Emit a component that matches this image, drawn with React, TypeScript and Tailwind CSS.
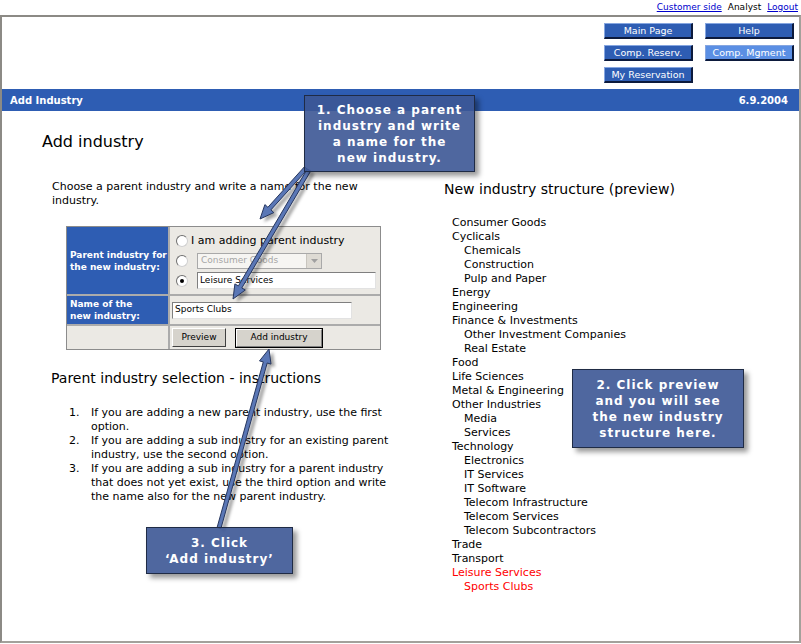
import React from "react";

const tree: { name: string; sub?: boolean; red?: boolean }[] = [
  { name: "Consumer Goods" },
  { name: "Cyclicals" },
  { name: "Chemicals", sub: true },
  { name: "Construction", sub: true },
  { name: "Pulp and Paper", sub: true },
  { name: "Energy" },
  { name: "Engineering" },
  { name: "Finance & Investments" },
  { name: "Other Investment Companies", sub: true },
  { name: "Real Estate", sub: true },
  { name: "Food" },
  { name: "Life Sciences" },
  { name: "Metal & Engineering" },
  { name: "Other Industries" },
  { name: "Media", sub: true },
  { name: "Services", sub: true },
  { name: "Technology" },
  { name: "Electronics", sub: true },
  { name: "IT Services", sub: true },
  { name: "IT Software", sub: true },
  { name: "Telecom Infrastructure", sub: true },
  { name: "Telecom Services", sub: true },
  { name: "Telecom Subcontractors", sub: true },
  { name: "Trade" },
  { name: "Transport" },
  { name: "Leisure Services", red: true },
  { name: "Sports Clubs", sub: true, red: true },
];

// polygon points for a thick arrow ending at (x2, y2)
const arrowPoints = (x1: number, y1: number, x2: number, y2: number) => {
  const w = 2;
  const hl = 14;
  const hw = 6;
  const dx = x2 - x1;
  const dy = y2 - y1;
  const len = Math.hypot(dx, dy);
  const ux = dx / len;
  const uy = dy / len;
  const px = -uy;
  const py = ux;
  const bx = x2 - ux * hl;
  const by = y2 - uy * hl;
  const pts = [
    [x1 + px * w, y1 + py * w],
    [bx + px * w, by + py * w],
    [bx + px * hw, by + py * hw],
    [x2, y2],
    [bx - px * hw, by - py * hw],
    [bx - px * w, by - py * w],
    [x1 - px * w, y1 - py * w],
  ];
  return pts.map((p) => p.map((n) => n.toFixed(1)).join(",")).join(" ");
};

const arrows = [
  [306, 168, 260, 219],
  [309, 170, 233, 299],
  [219, 528, 269, 349],
];

const TopButton: React.FC<{ label: string; active?: boolean }> = ({ label, active }) => (
  <div
    className={`h-[16px] flex items-center justify-center text-white text-[9.5px] leading-none border border-t-[#86a6e0] border-l-[#86a6e0] border-r-2 border-b-2 border-r-[#0c1a3c] border-b-[#0c1a3c] ${
      active ? "bg-[#5b8fe4]" : "bg-[#2e5db3]"
    }`}
  >
    {label}
  </div>
);

const Radio: React.FC<{ checked?: boolean }> = ({ checked }) => (
  <span className="w-[12px] h-[12px] rounded-full bg-white border border-t-[#6f6f6f] border-l-[#6f6f6f] border-r-[#d0d0d0] border-b-[#d0d0d0] flex items-center justify-center shrink-0">
    {checked && <span className="w-[4px] h-[4px] rounded-full bg-black" />}
  </span>
);

const Callout: React.FC<{ className: string; lines: string[] }> = ({ className, lines }) => (
  <div
    className={`absolute flex flex-col items-center justify-center bg-[rgba(60,87,149,0.9)] border border-[#1f2b45] shadow-[4px_4px_5px_rgba(0,0,0,0.4)] text-white font-bold text-[12px] leading-[16px] tracking-[1px] text-center ${className}`}
  >
    {lines.map((l) => (
      <div key={l} className="whitespace-nowrap">
        {l}
      </div>
    ))}
  </div>
);

export default function App() {
  return (
    <div className="relative w-[801px] h-[644px] bg-white overflow-hidden text-black font-['DejaVu_Sans',sans-serif]">
      {/* top links */}
      <div className="h-[15px] flex justify-end items-center gap-[6px] pr-[3px] text-[9px] leading-none">
        <span className="text-[#0000cc] underline">Customer side</span>
        <span>Analyst</span>
        <span className="text-[#0000cc] underline">Logout</span>
      </div>

      {/* frame */}
      <div className="h-[628px] border-2 border-[#a3a19b] border-t-[#8c8a85] border-l-[#8c8a85]">
        <div className="flex justify-end pr-[5px] pt-[6px]">
          <div className="grid grid-cols-[89px_89px] gap-x-[12px] gap-y-[6px]">
            <TopButton label="Main Page" />
            <TopButton label="Help" />
            <TopButton label="Comp. Reserv." />
            <TopButton label="Comp. Mgment" active />
            <TopButton label="My Reservation" />
          </div>
        </div>

        <div className="mt-[6px] h-[22px] bg-[#2e5db3] flex items-center justify-between pl-[8px] pr-[11px] text-white font-bold text-[10px]">
          <span>Add Industry</span>
          <span>6.9.2004</span>
        </div>

        <div className="flex">
          {/* left column */}
          <div className="w-[442px] pl-[40px] pt-[21px]">
            <h2 className="text-[16px] leading-[20px]">Add industry</h2>
            <p className="mt-[28px] ml-[10px] text-[11px] leading-[14px] whitespace-nowrap">
              Choose a parent industry and write a name for the new
              <br />
              industry.
            </p>

            <div className="mt-[18px] ml-[24px] w-[315px] border border-[#8c8c8c] bg-[#ababab] grid grid-cols-[101px_210px] grid-rows-[67px_28px_23px] gap-[2px]">
              <div className="bg-[#2e5db3] text-white font-bold text-[9px] leading-[12px] pl-[3px] flex flex-col justify-center whitespace-nowrap">
                <span>Parent industry for</span>
                <span>the new industry:</span>
              </div>
              <div className="bg-[#ebe9e4] pl-[6px] pt-[7px] flex flex-col">
                <div className="h-[14px] flex items-center gap-[3px] text-[11px]">
                  <Radio />
                  <span>I am adding parent industry</span>
                </div>
                <div className="mt-[5px] h-[16px] flex items-center gap-[9px]">
                  <Radio />
                  <div className="w-[125px] h-[16px] bg-[#f6f5f2] border border-[#a9a9a9] flex items-center justify-between">
                    <span className="pl-[3px] text-[9px] text-[#a6a6a6]">Consumer Goods</span>
                    <span className="w-[15px] h-[14px] bg-[#dedbd4] border-l border-[#c8c5be] flex items-center justify-center">
                      <svg width="7" height="4" viewBox="0 0 7 4">
                        <path d="M0 0h7L3.5 4z" fill="#a0a0a0" />
                      </svg>
                    </span>
                  </div>
                </div>
                <div className="mt-[3px] h-[17px] flex items-center gap-[9px]">
                  <Radio checked />
                  <div className="w-[179px] h-[17px] bg-white border border-t-[#7f7f7f] border-l-[#7f7f7f] border-r-[#e2e2e2] border-b-[#e2e2e2] flex items-center pl-[2px] text-[9px]">
                    Leisure Services
                  </div>
                </div>
              </div>

              <div className="bg-[#2e5db3] text-white font-bold text-[9px] leading-[12px] pl-[3px] flex flex-col justify-center whitespace-nowrap">
                <span>Name of the</span>
                <span>new industry:</span>
              </div>
              <div className="bg-[#ebe9e4] pl-[2px] flex items-center">
                <div className="w-[180px] h-[17px] bg-white border border-t-[#7f7f7f] border-l-[#7f7f7f] border-r-[#e2e2e2] border-b-[#e2e2e2] flex items-center pl-[2px] text-[9px]">
                  Sports Clubs
                </div>
              </div>

              <div className="bg-[#ebe9e4]" />
              <div className="bg-[#ebe9e4] pl-[2px] flex items-center gap-[9px] text-[9px]">
                <div className="w-[54px] h-[19px] bg-[#d6d3cc] border border-t-white border-l-white border-r-[#404040] border-b-[#404040] flex items-center justify-center">
                  Preview
                </div>
                <div className="w-[88px] h-[20px] border border-black">
                  <div className="w-full h-full bg-[#d6d3cc] border border-t-white border-l-white border-r-[#808080] border-b-[#808080] flex items-center justify-center">
                    Add industry
                  </div>
                </div>
              </div>
            </div>

            <h3 className="mt-[19px] ml-[9px] text-[14px] leading-[18px]">
              Parent industry selection - instructions
            </h3>
            <ol className="mt-[19px] ml-[27px] text-[11px] leading-[14px] whitespace-nowrap">
              <li className="flex">
                <span className="w-[22px]">1.</span>
                <span>
                  If you are adding a new parent industry, use the first
                  <br />
                  option.
                </span>
              </li>
              <li className="flex">
                <span className="w-[22px]">2.</span>
                <span>
                  If you are adding a sub industry for an existing parent
                  <br />
                  industry, use the second option.
                </span>
              </li>
              <li className="flex">
                <span className="w-[22px]">3.</span>
                <span>
                  If you are adding a sub industry for a parent industry
                  <br />
                  that does not yet exist, use the third option and write
                  <br />
                  the name also for the new parent industry.
                </span>
              </li>
            </ol>
          </div>

          {/* right column */}
          <div className="pt-[69px]">
            <h3 className="text-[14px] leading-[18px] whitespace-nowrap">New industry structure (preview)</h3>
            <ul className="mt-[18px] pl-[8px] text-[11px] leading-[14px] whitespace-nowrap">
              {tree.map((t) => (
                <li
                  key={t.name}
                  className={`${t.sub ? "pl-[12px]" : ""} ${t.red ? "text-[#ff0000]" : ""}`}
                >
                  {t.name}
                </li>
              ))}
            </ul>
          </div>
        </div>
      </div>

      {/* annotation arrows */}
      <svg className="absolute left-0 top-0 pointer-events-none" width="801" height="644">
        <defs>
          <filter id="blur" x="-20%" y="-20%" width="140%" height="140%">
            <feGaussianBlur stdDeviation="1.5" />
          </filter>
        </defs>
        {arrows.map(([a, b, c, d], i) => (
          <polygon
            key={`s${i}`}
            points={arrowPoints(a + 4, b + 3, c + 4, d + 3)}
            fill="rgba(0,0,0,0.35)"
            filter="url(#blur)"
          />
        ))}
        {arrows.map(([a, b, c, d], i) => (
          <polygon
            key={i}
            points={arrowPoints(a, b, c, d)}
            fill="#5a77b6"
            stroke="#26365e"
            strokeWidth="1"
            strokeLinejoin="round"
          />
        ))}
      </svg>

      <Callout
        className="left-[304px] top-[95px] w-[171px] h-[77px]"
        lines={["1. Choose a parent", "industry and write", "a name for the", "new industry."]}
      />
      <Callout
        className="left-[572px] top-[369px] w-[172px] h-[79px]"
        lines={["2. Click preview", "and you will see", "the new industry", "structure here."]}
      />
      <Callout className="left-[146px] top-[527px] w-[147px] h-[47px]" lines={["3. Click", "\u2018Add industry\u2019"]} />
    </div>
  );
}
